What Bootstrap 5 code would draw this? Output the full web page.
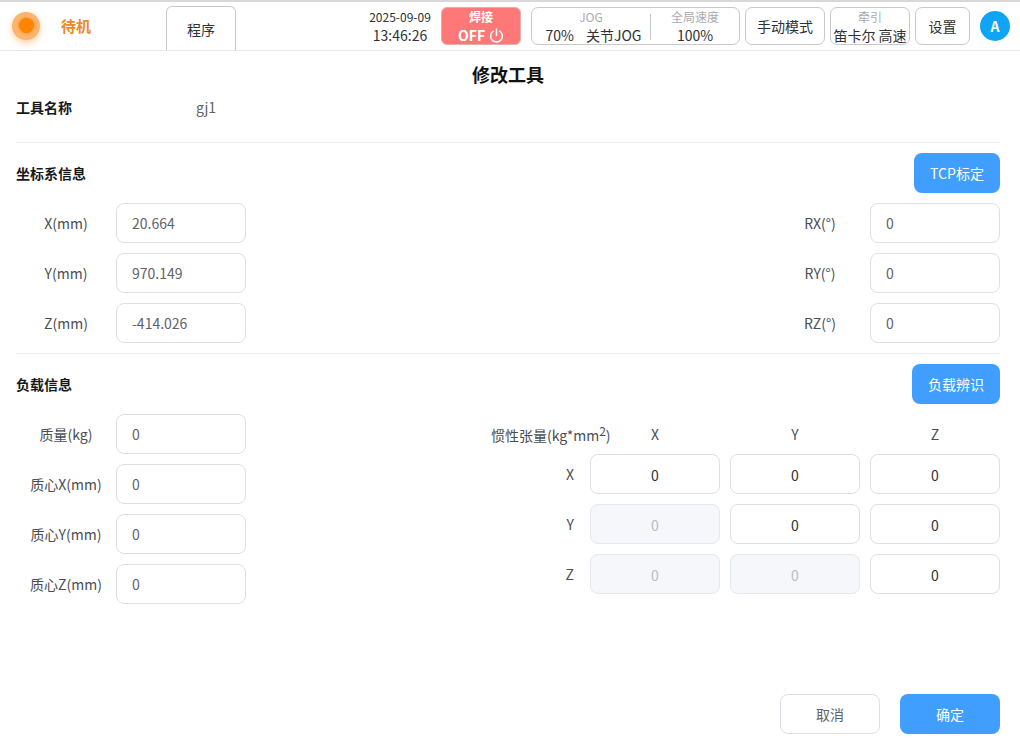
<!DOCTYPE html>
<html lang="zh"><head><meta charset="utf-8"><title>修改工具</title>
<link href="https://cdn.jsdelivr.net/npm/bootstrap@5.3.0/dist/css/bootstrap.min.css" rel="stylesheet">
<style>
html,body{height:752px;overflow:hidden}
body{font-family:"Noto Sans CJK SC","Noto Sans",sans-serif;font-size:14px;color:#303133;background:#fff}
.topbar{height:51px;border-top:2px solid #d8d8d8;border-bottom:1px solid #e6e6e6;padding:0 10px 0 12px}
.lamp{width:28px;height:28px;border-radius:50%;background:#fdb46f;box-shadow:0 3px 7px rgba(255,150,50,.45);margin-top:-1px}
.lamp i{width:15px;height:15px;border-radius:50%;background:#ff8400;box-shadow:0 0 3px #ff8400;display:block}
.state{font-size:15px;font-weight:700;color:#f08a24;margin-left:21px;width:105px;line-height:1;margin-top:-2px}
.tabb{width:70px;height:44px;margin-top:4px;border:1px solid #c8c9cc;border-bottom:0;border-radius:6px 6px 0 0;font-size:14px;color:#303133;padding-top:1px}
.clock{width:62px;margin-right:10px;line-height:19px;text-align:center;white-space:nowrap;color:#303133}
.clock .d1{font-size:12px}.clock .d2{font-size:14px}
.weld{width:80px;height:38px;background:#ff7878;border:1px solid #e0b0b0;border-radius:6px;color:#fff;line-height:18px;font-size:12px;margin-right:10px;font-weight:700}
.weld .off{font-size:14px;font-weight:700;display:flex;align-items:center;justify-content:center;gap:4px}
.hbox{height:38px;border:1px solid #c8c9cc;border-radius:7px;line-height:18px;text-align:center;color:#303133;background:#fff;overflow:hidden;white-space:nowrap}
.hbox .cap{font-size:12px;color:#a8abb2}
.jog{width:209px;margin-right:5px}
.jog .seg1{width:119px;border-right:1px solid #c8c9cc;height:26px;margin-top:6px;padding-left:5px}
.jog .seg1b{margin-top:-6px;padding-right:5px}
.jog .seg2{flex:1;margin-top:0}
.jrow{gap:12px}
.mode{width:80px;margin-right:5px;font-size:14px}
.trac{width:80px;margin-right:5px;font-size:14px}
.sett{width:55px;margin-right:10px;font-size:14px}
.avatar{width:30px;height:30px;border-radius:50%;background:#0ea5f4;color:#fff;font-weight:700;font-size:14px}
.page{padding:0 20px 0 16px;position:relative}
.ttl{font-size:18px;font-weight:700;color:#111;text-align:center;line-height:24px;padding-top:11px;height:36px;margin-bottom:0}
.namerow{height:56px;padding-top:0;align-items:flex-start;border-bottom:1px solid #ebeef5}
.sec{font-size:14px;font-weight:700;color:#17191c}
.namerow .sec,.namerow .val{line-height:40px}
.namerow .lab0{width:180px}
.val{font-size:14px;color:#606266}
.sechead{height:40px;margin-top:10px}
.bluebtn{background:#409eff;border:0;border-radius:8px;color:#fff;font-size:14px;height:40px;padding:0}
.bluebtn:hover{background:#409eff;color:#fff}
.fields{display:flex;flex-direction:column;gap:10px;margin-top:10px}
.frow{display:flex;align-items:center}
.flab{width:100px;text-align:center;font-size:14px;color:#4a4d52;line-height:40px;white-space:nowrap}
.fin{width:130px;height:40px;border:1px solid #dcdfe6;border-radius:8px;font-size:14px;color:#606266;padding:0 15px;box-shadow:none}
.fin.ctr{text-align:center;color:#303133;padding:1px 0 0}
.fin:disabled{background:#f5f7fa;border-color:#e4e7ed;color:#b8bcc4;opacity:1}
.rule{border-top:1px solid #ebeef5;margin-top:10px}
.inert{width:510px;margin-top:10px}
.ihead{height:40px;display:flex;align-items:center}
.ihead .ilab{width:99px;margin-left:1px;white-space:nowrap;color:#4a4d52;font-size:14px;line-height:42px;padding-top:2px}
.ihead sup{font-size:12px;top:-.4em;line-height:0}
.ihead .ic{width:130px;text-align:center;color:#4a4d52;margin-left:10px}
.ihead .ilab + .ic{margin-left:0}
.irows{display:flex;flex-direction:column;gap:10px}
.irow{display:flex;gap:10px;align-items:center}
.irow .rl{width:100px;text-align:right;padding-right:16px;margin-right:-10px;color:#4a4d52}
.foot{position:absolute;top:643px;right:20px;display:flex;gap:20px}
.cancel{width:100px;height:40px;background:#fff;border:1px solid #dcdfe6;border-radius:8px;color:#606266;font-size:14px;padding:0}
.okb{width:100px}
</style></head><body>
<header class="topbar d-flex align-items-center">
  <div class="lamp d-flex align-items-center justify-content-center"><i></i></div>
  <div class="state">待机</div>
  <div class="tabb d-flex align-items-center justify-content-center align-self-start">程序</div>
  <div class="ms-auto d-flex align-items-center">
    <div class="clock"><div class="d1">2025-09-09</div><div class="d2">13:46:26</div></div>
    <div class="weld text-center"><div>焊接</div><div class="off">OFF <svg width="15" height="15" viewBox="0 0 14 14" fill="none" stroke="#fff" stroke-width="1.4" stroke-linecap="round"><path d="M4 3a5.5 5.5 0 1 0 6 0"/><path d="M7 1v6"/></svg></div></div>
    <div class="hbox jog d-flex">
      <div class="seg1"><div class="seg1b cap">JOG</div><div class="d-flex justify-content-center jrow"><span>70%</span><span>关节JOG</span></div></div>
      <div class="seg2"><div class="cap">全局速度</div><div>100%</div></div>
    </div>
    <div class="hbox mode d-flex align-items-center justify-content-center">手动模式</div>
    <div class="hbox trac"><div class="cap">牵引</div><div>笛卡尔 高速</div></div>
    <div class="hbox sett d-flex align-items-center justify-content-center">设置</div>
    <div class="avatar d-flex align-items-center justify-content-center">A</div>
  </div>
</header>
<main class="page">
  <h1 class="ttl">修改工具</h1>
  <div class="namerow d-flex"><div class="sec lab0">工具名称</div><div class="val">gj1</div></div>
  <div class="sechead d-flex justify-content-between align-items-center"><div class="sec">坐标系信息</div><button class="btn bluebtn" style="width:86px">TCP标定</button></div>
  <div class="d-flex justify-content-between">
    <div class="fields">
      <div class="frow"><div class="flab">X(mm)</div><input class="form-control fin" value="20.664"></div>
      <div class="frow"><div class="flab">Y(mm)</div><input class="form-control fin" value="970.149"></div>
      <div class="frow"><div class="flab">Z(mm)</div><input class="form-control fin" value="-414.026"></div>
    </div>
    <div class="fields">
      <div class="frow"><div class="flab">RX(°)</div><input class="form-control fin" value="0"></div>
      <div class="frow"><div class="flab">RY(°)</div><input class="form-control fin" value="0"></div>
      <div class="frow"><div class="flab">RZ(°)</div><input class="form-control fin" value="0"></div>
    </div>
  </div>
  <div class="rule"></div>
  <div class="sechead d-flex justify-content-between align-items-center"><div class="sec">负载信息</div><button class="btn bluebtn" style="width:88px">负载辨识</button></div>
  <div class="d-flex justify-content-between">
    <div class="fields">
      <div class="frow"><div class="flab">质量(kg)</div><input class="form-control fin" value="0"></div>
      <div class="frow"><div class="flab">质心X(mm)</div><input class="form-control fin" value="0"></div>
      <div class="frow"><div class="flab">质心Y(mm)</div><input class="form-control fin" value="0"></div>
      <div class="frow"><div class="flab">质心Z(mm)</div><input class="form-control fin" value="0"></div>
    </div>
    <div class="inert">
      <div class="ihead"><div class="ilab">惯性张量(kg*mm<sup>2</sup>)</div><div class="ic">X</div><div class="ic">Y</div><div class="ic">Z</div></div>
      <div class="irows">
        <div class="irow"><div class="rl">X</div><input class="form-control fin ctr" value="0"><input class="form-control fin ctr" value="0"><input class="form-control fin ctr" value="0"></div>
        <div class="irow"><div class="rl">Y</div><input class="form-control fin ctr" value="0" disabled><input class="form-control fin ctr" value="0"><input class="form-control fin ctr" value="0"></div>
        <div class="irow"><div class="rl">Z</div><input class="form-control fin ctr" value="0" disabled><input class="form-control fin ctr" value="0" disabled><input class="form-control fin ctr" value="0"></div>
      </div>
    </div>
  </div>
  <div class="foot"><button class="btn cancel">取消</button><button class="btn bluebtn okb">确定</button></div>
</main>
<script src="https://cdn.jsdelivr.net/npm/bootstrap@5.3.0/dist/js/bootstrap.bundle.min.js"></script>
</body></html>
